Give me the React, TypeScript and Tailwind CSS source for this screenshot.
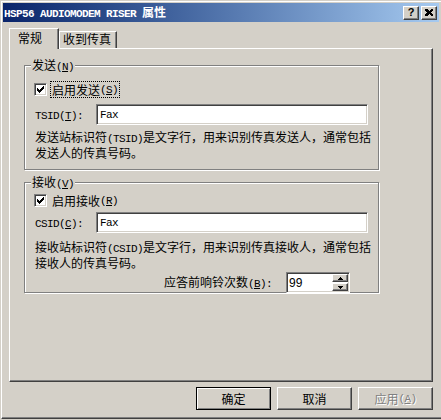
import type { ReactNode } from "react";

const raised =
  "border border-t-white border-l-white border-r-[#404040] border-b-[#404040] shadow-[inset_-1px_-1px_0_#808080]";
const sunken =
  "border border-t-[#808080] border-l-[#808080] border-r-white border-b-white shadow-[inset_1px_1px_0_#404040,inset_-1px_-1px_0_#d4d0c8]";
const etched = "border border-[#808080] shadow-[inset_1px_1px_0_#fff,1px_1px_0_#fff]";

// latin bits in the old bitmap font are 6px wide
const Mono = ({ children }: { children: ReactNode }) => (
  <span className="font-['Liberation_Mono',monospace] text-[11px] tracking-[-0.6px]">
    {children}
  </span>
);

const Key = ({ k }: { k: string }) => (
  <Mono>
    (<u className="underline-offset-1">{k}</u>)
  </Mono>
);

const Check = () => (
  <div className={`w-[13px] h-[13px] bg-white flex items-center justify-center ${sunken}`}>
    <svg width="7" height="7" viewBox="0 0 7 7" shapeRendering="crispEdges">
      <path d="M0 2h1v3h-1zM1 3h1v3h-1zM2 4h1v3h-1zM3 3h1v3h-1zM4 2h1v3h-1zM5 1h1v3h-1zM6 0h1v3h-1z" fill="#000" />
    </svg>
  </div>
);

const Field = ({ value }: { value: string }) => (
  <div className={`w-[272px] h-[21px] bg-white flex items-center pl-[3px] ${sunken}`}>
    <Mono>{value}</Mono>
  </div>
);

const Group = ({
  legend,
  className,
  children,
}: {
  legend: ReactNode;
  className: string;
  children: ReactNode;
}) => (
  <div className={`relative w-[355px] pl-[9px] ${etched} ${className}`}>
    <span className="absolute left-[6px] top-[-7px] h-[12px] leading-[12px] px-[1px] bg-[#d4d0c8]">
      {legend}
    </span>
    {children}
  </div>
);

const Btn = ({
  children,
  primary,
  disabled,
}: {
  children: ReactNode;
  primary?: boolean;
  disabled?: boolean;
}) => (
  <div
    className={`w-[75px] h-[23px] flex items-center justify-center leading-[12px] ${
      primary
        ? "border border-black shadow-[inset_1px_1px_0_#fff,inset_-1px_-1px_0_#808080]"
        : raised
    } ${disabled ? "text-[#808080] [text-shadow:1px_1px_0_#fff]" : "text-black"}`}
  >
    {children}
  </div>
);

export default function App() {
  return (
    <div className="w-[441px] h-[420px] overflow-hidden bg-[#d4d0c8] pl-px pt-px font-['Noto_Sans_CJK_SC',sans-serif] text-[12px] text-black">
      <div className="h-[418px] border-l border-t border-white border-b border-b-[#404040] shadow-[inset_0_-1px_0_#808080] pl-px pt-px">
        {/* Title bar */}
        <div className="mr-[2px] h-[19px] flex items-center justify-between bg-linear-to-r from-[#0a246a] to-[#a6caf0] pl-px pr-[2px]">
          <div className="text-white font-bold leading-[12px] whitespace-nowrap">
            <Mono>HSP56 AUDIOMODEM RISER </Mono>属性
          </div>
          <div className="flex gap-[2px]">
            <div className={`w-[16px] h-[14px] bg-[#d4d0c8] flex items-center justify-center ${raised}`}>
              <span className="font-['Liberation_Sans',sans-serif] font-bold text-[11px] leading-[11px]">?</span>
            </div>
            <div className={`w-[16px] h-[14px] bg-[#d4d0c8] flex items-center justify-center ${raised}`}>
              <svg width="8" height="7" viewBox="0 0 8 7" shapeRendering="crispEdges">
                <path d="M0 0h2l2 2 2-2h2v1l-2 2.5 2 2.5v1h-2l-2-2-2 2h-2v-1l2-2.5-2-2.5z" fill="#000" />
              </svg>
            </div>
          </div>
        </div>

        <div className="pl-[6px] pt-[6px]">
          {/* Tabs */}
          <div className="h-[20px] flex items-end">
            <div className="relative z-10 -mb-px w-[50px] h-[21px] bg-[#d4d0c8] border-t border-l border-white border-r border-r-[#404040] shadow-[inset_-1px_0_0_#808080] pl-[8px] pt-[3px] leading-[12px]">
              常规
            </div>
            <div className="w-[58px] h-[17px] border-t border-l border-white border-r border-r-[#404040] shadow-[inset_-1px_0_0_#808080] pl-[3px] pt-px leading-[12px]">
              收到传真
            </div>
          </div>

          {/* Panel */}
          <div className="w-[424px] h-[334px] border border-t-white border-l-white border-r-[#404040] border-b-[#404040] shadow-[inset_-1px_-1px_0_#808080] pl-[14px] pt-[16px] leading-[12px]">
            <Group
              className="h-[105px] pt-[15px]"
              legend={
                <>
                  发送<Key k="N" />
                </>
              }
            >
              <div className="h-[17px] flex items-center">
                <Check />
                <span className="ml-[3px] h-[17px] flex items-center px-px border border-dotted border-black">
                  启用发送<Key k="S" />
                </span>
              </div>
              <div className="mt-[6px] flex items-center">
                <div className="w-[62px] pl-px">
                  <Mono>TSID</Mono>
                  <Key k="T" />
                  <Mono>:</Mono>
                </div>
                <Field value="Fax" />
              </div>
              <div className="mt-[5px] pl-px whitespace-nowrap leading-[13px]">
                发送站标识符<Mono>(TSID)</Mono>是文字行，用来识别传真发送人，通常包括
                <br />
                发送人的传真号码。
              </div>
            </Group>

            <Group
              className="mt-[12px] h-[111px] pt-[9px]"
              legend={
                <>
                  接收<Key k="V" />
                </>
              }
            >
              <div className="h-[17px] flex items-center">
                <Check />
                <span className="ml-[3px] h-[17px] flex items-center px-px border border-transparent">
                  启用接收<Key k="R" />
                </span>
              </div>
              <div className="mt-[3px] flex items-center">
                <div className="w-[62px] pl-px">
                  <Mono>CSID</Mono>
                  <Key k="C" />
                  <Mono>:</Mono>
                </div>
                <Field value="Fax" />
              </div>
              <div className="mt-[7px] pl-px whitespace-nowrap leading-[13px]">
                接收站标识符<Mono>(CSID)</Mono>是文字行，用来识别传真接收人，通常包括
                <br />
                接收人的传真号码。
              </div>
              <div className="mt-[3px] w-[316px] flex items-center justify-end">
                <span className="mr-[14px]">
                  应答前响铃次数<Key k="B" />
                  <Mono>:</Mono>
                </span>
                <div className={`w-[64px] h-[21px] bg-white flex ${sunken}`}>
                  <div className="flex-1 flex items-center pl-[2px] font-['Liberation_Sans',sans-serif] text-[12px]">
                    99
                  </div>
                  <div className="w-[17px] flex flex-col pt-px pb-px pr-px">
                    <div className={`h-[8px] bg-[#d4d0c8] flex items-center justify-center ${raised}`}>
                      <svg width="5" height="3" viewBox="0 0 5 3" shapeRendering="crispEdges">
                        <path d="M2 0h1v1h1v1h1v1h-5v-1h1v-1h1z" fill="#000" />
                      </svg>
                    </div>
                    <div className={`mt-px h-[8px] bg-[#d4d0c8] flex items-center justify-center ${raised}`}>
                      <svg width="5" height="3" viewBox="0 0 5 3" shapeRendering="crispEdges">
                        <path d="M0 0h5v1h-1v1h-1v1h-1v-1h-1v-1h-1z" fill="#000" />
                      </svg>
                    </div>
                  </div>
                </div>
              </div>
            </Group>
          </div>

          {/* Buttons */}
          <div className="w-[424px] mt-[5px] flex justify-end gap-[6px]">
            <Btn primary>确定</Btn>
            <Btn>取消</Btn>
            <Btn disabled>
              应用<Key k="A" />
            </Btn>
          </div>
        </div>
      </div>
    </div>
  );
}
